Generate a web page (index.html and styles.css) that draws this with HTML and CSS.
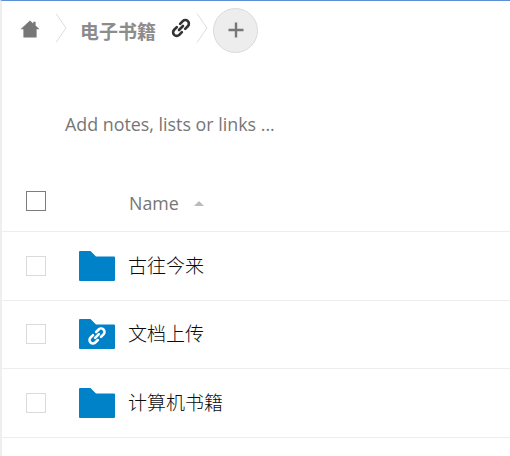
FILE: index.html
```html
<!DOCTYPE html>
<html lang="zh">
<head>
<meta charset="utf-8">
<title>电子书籍</title>
<link rel="stylesheet" href="styles.css">
</head>
<body>
<main class="app">
  <nav class="crumbs">
    <svg class="home" viewBox="0 0 20 18" width="20" height="18"><path d="M10 0.5 L13.2 3.4 V1.8 H15.6 V5.6 L19.5 9.2 H16.6 V17.5 H3.4 V9.2 H0.5 Z" fill="#777"/></svg>
    <svg class="chev chev-a" viewBox="0 0 12 30" width="12" height="30"><path d="M1 0.5 L11 15 L1 29.5" fill="none" stroke="#ddd" stroke-width="1"/></svg>
    <span class="crumb-name">电子书籍</span>
    <svg class="crumb-link" viewBox="0 0 20 20" width="22" height="22"><g fill="none" stroke="#333" stroke-width="2.4" stroke-linecap="round"><path d="M8.2 11.8 L11.8 8.2"/><path d="M9.2 6.2 L11.6 3.8 A2.9 2.9 0 0 1 16.2 8.4 L13.8 10.8"/><path d="M10.8 13.8 L8.4 16.2 A2.9 2.9 0 0 1 3.8 11.6 L6.2 9.2"/></g></svg>
    <svg class="chev chev-b" viewBox="0 0 12 30" width="12" height="30"><path d="M1 0.5 L11 15 L1 29.5" fill="none" stroke="#ddd" stroke-width="1"/></svg>
    <button class="add" type="button" aria-label="Add"><svg viewBox="0 0 16 16" width="16" height="16"><path d="M8 0.5 V15.5 M0.5 8 H15.5" stroke="#777" stroke-width="2.4"/></svg></button>
  </nav>
  <p class="notes">Add notes, lists or links ...</p>
  <div class="head">
    <span class="check check-head"></span>
    <span class="head-name">Name</span>
    <span class="sort"></span>
  </div>
  <div class="row">
    <span class="check"></span>
    <svg class="folder" viewBox="0 0 36 30" width="36" height="30"><path d="M1 0 H11.5 L17 5.5 H35 A1 1 0 0 1 36 6.5 V29 A1 1 0 0 1 35 30 H1 A1 1 0 0 1 0 29 V1 A1 1 0 0 1 1 0 Z" fill="#0082c9"/></svg>
    <span class="name">古往今来</span>
  </div>
  <div class="row">
    <span class="check"></span>
    <svg class="folder" viewBox="0 0 36 30" width="36" height="30"><path d="M1 0 H11.5 L17 5.5 H35 A1 1 0 0 1 36 6.5 V29 A1 1 0 0 1 35 30 H1 A1 1 0 0 1 0 29 V1 A1 1 0 0 1 1 0 Z" fill="#0082c9"/><g transform="translate(7.5 6.5) scale(1.05)" fill="none" stroke="#fff" stroke-width="2.4" stroke-linecap="round"><path d="M8.2 11.8 L11.8 8.2"/><path d="M9.2 6.2 L11.6 3.8 A2.9 2.9 0 0 1 16.2 8.4 L13.8 10.8"/><path d="M10.8 13.8 L8.4 16.2 A2.9 2.9 0 0 1 3.8 11.6 L6.2 9.2"/></g></svg>
    <span class="name">文档上传</span>
  </div>
  <div class="row">
    <span class="check"></span>
    <svg class="folder" viewBox="0 0 36 30" width="36" height="30"><path d="M1 0 H11.5 L17 5.5 H35 A1 1 0 0 1 36 6.5 V29 A1 1 0 0 1 35 30 H1 A1 1 0 0 1 0 29 V1 A1 1 0 0 1 1 0 Z" fill="#0082c9"/></svg>
    <span class="name">计算机书籍</span>
  </div>
</main>
</body>
</html>
```
FILE: styles.css
```css
html, body {
  margin: 0;
  padding: 0;
  background: #fff;
}
body {
  height: 456px;
  overflow: hidden;
  font-family: "Open Sans", "Noto Sans CJK SC", sans-serif;
}
.app {
  height: 455px;
  border-top: 1px solid #5b8fd8;
  border-left: 2px solid #eee;
}
.crumbs {
  display: flex;
  align-items: center;
  height: 58px;
}
.home {
  margin-left: 18px;
  margin-top: -3px;
}
.chev {
  margin-top: -4px;
}
.chev-a {
  margin-left: 15px;
}
.crumb-name {
  margin-left: 13px;
  padding-top: 2px;
  font: 700 19px/24px "Noto Sans CJK SC", sans-serif;
  color: #8c8c8c;
}
.crumb-link {
  margin-left: 14px;
  margin-top: -4px;
  margin-right: -1px;
}
.chev-b {
  margin-left: 5px;
}
.add {
  width: 45px;
  height: 45px;
  margin-left: 5px;
  padding: 0;
  display: flex;
  align-items: center;
  justify-content: center;
  background: #ededed;
  border: 1px solid #dbdbdb;
  border-radius: 50%;
}
.notes {
  margin: 30px 0 0;
  height: 70px;
  padding: 0 0 0 63px;
  display: flex;
  align-items: center;
  font-size: 17.85px;
  color: #767676;
}
.head {
  display: flex;
  align-items: center;
  height: 73px;
  box-sizing: border-box;
  padding: 12px 0 0 24px;
  border-bottom: 1px solid #ededed;
}
.check {
  display: block;
  box-sizing: border-box;
  width: 20px;
  height: 20px;
  flex: none;
  background: #fff;
  border: 1px solid #dbdbdb;
}
.check-head {
  border-color: #7d7d7d;
}
.head-name {
  margin-left: 83px;
  padding-top: 4px;
  font-size: 17.8px;
  color: #767676;
}
.sort {
  margin: 5px 0 0 15px;
  width: 0;
  height: 0;
  border-left: 5px solid transparent;
  border-right: 5px solid transparent;
  border-bottom: 5px solid #bbb;
}
.row {
  display: flex;
  align-items: center;
  height: 68.67px;
  box-sizing: border-box;
  padding-left: 24px;
  border-bottom: 1px solid #ededed;
}
.folder {
  margin-left: 33px;
  flex: none;
}
.name {
  margin-left: 13px;
  padding-bottom: 2px;
  font: 300 19px/24px "Noto Sans CJK SC", sans-serif;
  color: #0c0c0c;
}
```
